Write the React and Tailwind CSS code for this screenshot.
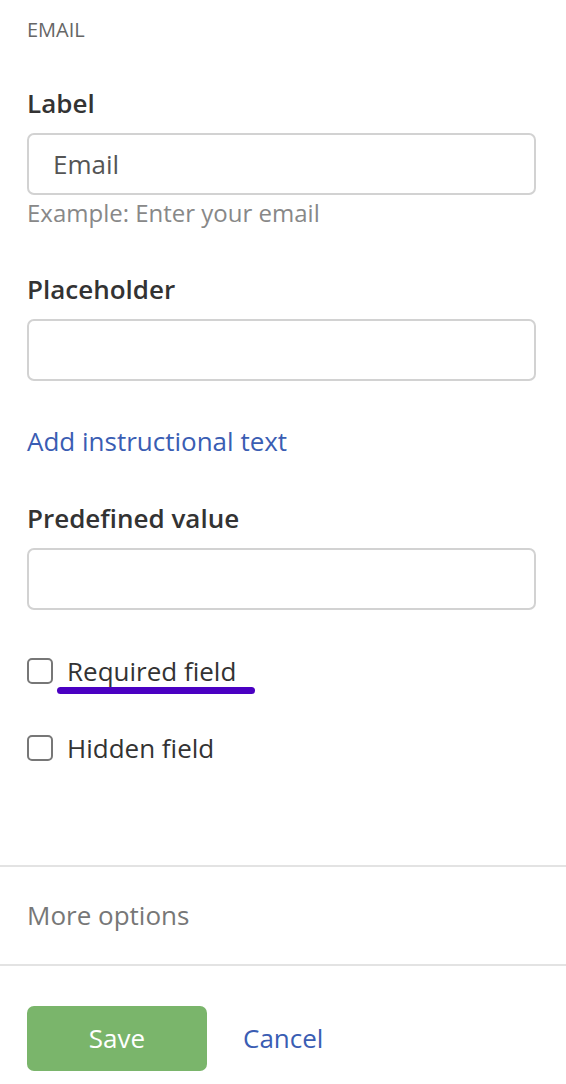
import { useState } from "react";

function Field({ label, value, className = "" }) {
    return (
        <div className={className}>
            <div className="text-[26px] leading-[34px] font-semibold text-[#333]">{label}</div>
            <input
                defaultValue={value}
                className="mt-[13px] block w-full h-[62px] rounded-[7px] border-2 border-[#d2d2d2] bg-white px-[24px] text-[26px] text-[#555] outline-none"
                style={{ fontFamily: "inherit" }}
            />
        </div>
    );
}

function Check({ label, checked, onChange, underline, className = "" }) {
    return (
        <label className={"flex items-center gap-[14px] cursor-pointer " + className}>
            <span
                onClick={onChange}
                className={
                    "w-[26px] h-[26px] rounded-[5px] border-2 border-[#777] flex items-center justify-center " +
                    (checked ? "bg-[#777]" : "bg-white")
                }
            >
                {checked && <span className="text-white text-[16px] leading-none">✓</span>}
            </span>
            <span className="relative text-[26px] leading-[34px] text-[#333]">
                {label}
                {underline && (
                    <span className="absolute left-[-10px] right-[-19px] top-[33px] h-[7px] rounded-full bg-[#4a00c2]" />
                )}
            </span>
        </label>
    );
}

export default function App() {
    const [required, setRequired] = useState(false);
    const [hidden, setHidden] = useState(false);

    return (
        <div className="w-full min-h-screen bg-white" style={{ fontFamily: '"Open Sans", sans-serif' }}>
            <div className="pl-[27px] pr-[30px] pt-[16px]">
                <div className="text-[20px] leading-[28px] text-[#666] uppercase">Email</div>

                <Field label="Label" value="Email" className="mt-[42px]" />
                <div className="mt-[2px] text-[24px] leading-[32px] text-[#888]">Example: Enter your email</div>

                <Field label="Placeholder" value="" className="mt-[43px]" />

                <a href="#" className="block mt-[43px] text-[26px] leading-[34px] text-[#3a5db3]">
                    Add instructional text
                </a>

                <Field label="Predefined value" value="" className="mt-[43px]" />

                <Check
                    label="Required field"
                    checked={required}
                    onChange={() => setRequired(!required)}
                    underline
                    className="mt-[44px]"
                />
                <Check
                    label="Hidden field"
                    checked={hidden}
                    onChange={() => setHidden(!hidden)}
                    className="mt-[43px]"
                />
            </div>

            <div className="mt-[100px] border-t-2 border-b-2 border-[#e3e3e3] h-[101px] flex items-center px-[27px]">
                <span className="text-[26px] text-[#777]">More options</span>
            </div>

            <div className="px-[27px] pt-[40px] flex items-center gap-[36px]">
                <button className="w-[180px] h-[65px] rounded-[7px] bg-[#7ab56b] text-white text-[26px]">Save</button>
                <a href="#" className="text-[26px] text-[#3a5db3]">Cancel</a>
            </div>
        </div>
    );
}
